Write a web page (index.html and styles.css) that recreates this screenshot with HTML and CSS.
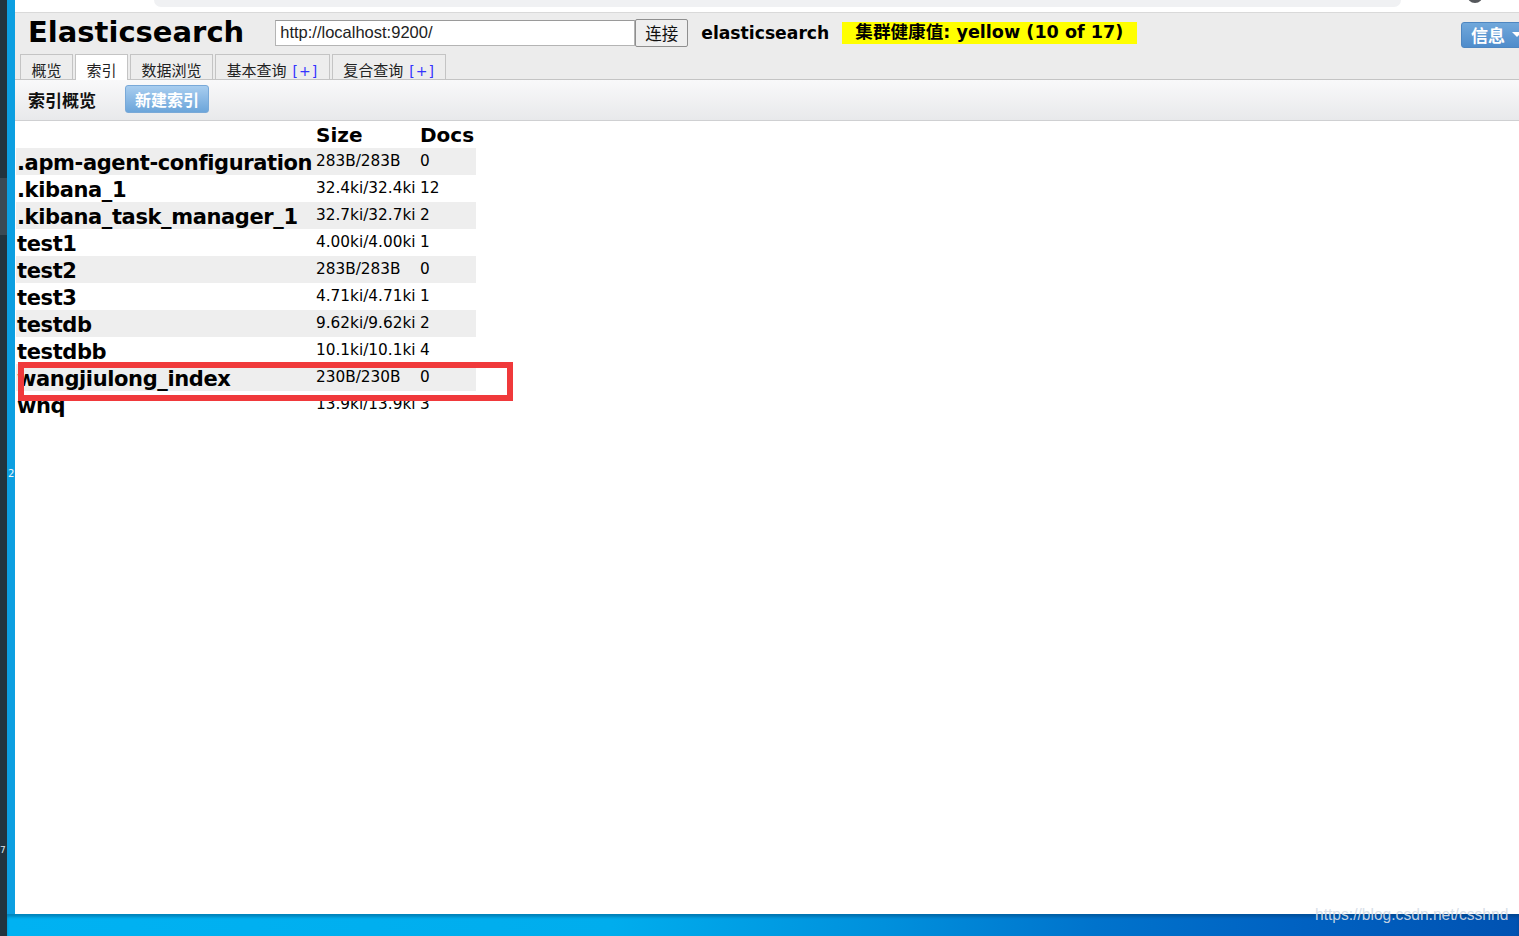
FILE: index.html
```html
<!DOCTYPE html>
<html lang="zh-CN">
<head>
<meta charset="utf-8">
<title>Elasticsearch</title>
<link rel="stylesheet" href="styles.css">
</head>
<body>
<div class="desk">
  <div class="dock">
    <div class="dock-seg"></div>
    <div class="dock-num">7</div>
  </div>
  <div class="screen">
    <div class="upper">
      <div class="edge"><span class="edge-num">2</span></div>
      <div class="browser">
        <div class="chrome">
          <div class="omni"></div>
          <div class="avatar"></div>
        </div>
        <div class="header">
          <div class="topline">
            <h1 class="brand">Elasticsearch</h1>
            <input class="url" type="text" value="http://localhost:9200/">
            <button class="connect">连接</button>
            <span class="cluster">elasticsearch</span>
            <span class="health">集群健康值: yellow (10 of 17)</span>
            <button class="info">信息<span class="caret"></span></button>
          </div>
          <div class="tabs">
            <div class="tab">概览</div>
            <div class="tab active">索引</div>
            <div class="tab">数据浏览</div>
            <div class="tab">基本查询<span class="plus">[+]</span></div>
            <div class="tab">复合查询<span class="plus">[+]</span></div>
          </div>
        </div>
        <div class="toolbar">
          <h2 class="tb-title">索引概览</h2>
          <button class="newbtn">新建索引</button>
        </div>
        <div class="content">
          <table class="indices">
            <thead>
              <tr><th class="name"></th><th class="size">Size</th><th class="docs">Docs</th></tr>
            </thead>
            <tbody>
              <tr class="alt"><td class="name">.apm-agent-configuration</td><td class="size">283B/283B</td><td class="docs">0</td></tr>
              <tr><td class="name">.kibana_1</td><td class="size">32.4ki/32.4ki</td><td class="docs">12</td></tr>
              <tr class="alt"><td class="name">.kibana_task_manager_1</td><td class="size">32.7ki/32.7ki</td><td class="docs">2</td></tr>
              <tr><td class="name">test1</td><td class="size">4.00ki/4.00ki</td><td class="docs">1</td></tr>
              <tr class="alt"><td class="name">test2</td><td class="size">283B/283B</td><td class="docs">0</td></tr>
              <tr><td class="name">test3</td><td class="size">4.71ki/4.71ki</td><td class="docs">1</td></tr>
              <tr class="alt"><td class="name">testdb</td><td class="size">9.62ki/9.62ki</td><td class="docs">2</td></tr>
              <tr><td class="name">testdbb</td><td class="size">10.1ki/10.1ki</td><td class="docs">4</td></tr>
              <tr class="alt"><td class="name">wangjiulong_index</td><td class="size">230B/230B</td><td class="docs">0</td></tr>
              <tr><td class="name">whq</td><td class="size">13.9ki/13.9ki</td><td class="docs">3</td></tr>
            </tbody>
          </table>
          <div class="mark"></div>
        </div>
      </div>
    </div>
    <div class="taskbar"></div>
  </div>
  <div class="watermark">https://blog.csdn.net/csshnd</div>
</div>
</body>
</html>
```
FILE: styles.css
```css
* { box-sizing: border-box; }
html, body { margin: 0; padding: 0; }
body {
  width: 1519px;
  height: 936px;
  overflow: hidden;
  font-family: "DejaVu Sans", "Noto Sans CJK SC", sans-serif;
  color: #000;
}
.desk { display: flex; height: 936px; position: relative; }

.dock { width: 7px; flex: none; background: #22343e; position: relative; overflow: hidden; }
.dock-seg { margin-top: 178px; height: 57px; background: #3a4a54; }
.dock-num { position: absolute; left: 0; top: 845px; color: #dfe6ea; font: 9px/10px "DejaVu Sans", sans-serif; }

.screen { flex: 1; display: flex; flex-direction: column; min-width: 0; }
.upper { display: flex; height: 914px; flex: none; }
.edge { width: 8px; flex: none; background: #0c9fe1; position: relative; overflow: hidden; }
.edge-num { position: absolute; left: 1px; top: 468px; color: #f2f6f8; font: 10px/12px "DejaVu Sans", sans-serif; }

.browser { flex: 1; display: flex; flex-direction: column; background: #fff; min-width: 0; overflow: hidden; }

.chrome { height: 13px; flex: none; background: #fff; border-bottom: 1px solid #d9d9d9; position: relative; display: flex; }
.omni { margin-left: 139px; width: 1247px; height: 7px; background: #f0f1f3; border-radius: 0 0 12px 12px; }
.avatar { position: absolute; left: 1452px; top: -13px; width: 16px; height: 16px; border-radius: 50%; background: #55585c; }

.header { background: #ececec; padding-left: 5px; flex: none; }
.topline { display: flex; align-items: center; height: 39px; white-space: nowrap; }
.brand { margin: 0 0 0 8px; font-size: 29px; font-weight: bold; line-height: 1; }
.url {
  margin-left: 31px; width: 360px; height: 26px;
  border: 1px solid #b4b4b4; border-top-color: #9a9a9a;
  background: #fff; padding: 0 4px;
  font-family: "Liberation Sans", Arial, sans-serif; font-size: 16.5px; color: #222;
  outline: none;
}
.connect {
  width: 53px; height: 28px; margin: 0; padding: 0;
  border: 1px solid #8f8f8f; border-radius: 2px; background: #efefef;
  font-family: "Noto Sans CJK SC", sans-serif; font-size: 16.5px; color: #111;
}
.cluster { margin-left: 13px; font-size: 17.2px; font-weight: bold; }
.health {
  margin-left: 13px; width: 295px; height: 22px; padding-left: 13px;
  background: #ffff00; display: flex; align-items: center;
  font-size: 17.6px; font-weight: bold; line-height: 1;
}
.info {
  margin-left: auto; margin-right: -12px; margin-top: 4px;
  height: 26px; padding: 0 8px 0 9px;
  display: flex; align-items: center; gap: 7px;
  border: 1px solid #4e86c0; border-radius: 3px;
  background: linear-gradient(#71a8db, #4f8ccb);
  color: #fff; font-family: "Noto Sans CJK SC", sans-serif; font-size: 17px; font-weight: bold;
}
.caret { width: 0; height: 0; border-left: 5px solid transparent; border-right: 5px solid transparent; border-top: 5px solid #fff; }

.tabs { display: flex; align-items: flex-end; gap: 2px; margin-top: 2px; height: 25px; position: relative; z-index: 2; }
.tab {
  height: 25px; padding: 6px 10.5px 0;
  border: 1px solid #c4c4c4; border-bottom: none;
  background: #ededed;
  font-family: "Noto Sans CJK SC", sans-serif; font-size: 15px; line-height: 18px; color: #222;
  white-space: nowrap;
}
.tab.active { background: #fff; height: 26px; margin-bottom: -1px; }
.plus { color: #3434ff; margin-left: 6px; letter-spacing: 1px; font-family: "DejaVu Sans", sans-serif; font-size: 14px; }

.toolbar {
  height: 42px; flex: none; display: flex; align-items: center; padding-left: 13px;
  border-top: 1px solid #c4c4c4; border-bottom: 1px solid #cfd0d2;
  background: linear-gradient(#f9f9fa, #e8e9eb);
  position: relative; z-index: 1;
}
.tb-title { margin: -2px 0 0; font-family: "Noto Sans CJK SC", sans-serif; font-size: 17px; font-weight: bold; color: #111; }
.newbtn {
  margin-left: 29px; margin-top: -3px; height: 28px; padding: 0 9px;
  border: 1px solid #79a9d8; border-radius: 3px;
  background: linear-gradient(#a8cdef, #6ca5da);
  color: #fff; font-family: "Noto Sans CJK SC", sans-serif; font-size: 16px; font-weight: bold;
}

.content { position: relative; padding-left: 1px; flex: 1; }
.indices { border-collapse: collapse; }
.indices th, .indices td { padding: 0; text-align: left; vertical-align: middle; }
.indices th { height: 27px; font-size: 20px; font-weight: bold; line-height: 26px; padding-top: 1px; }
.indices th.size { padding-left: 3px; }
.indices th.docs { padding-left: 2px; }
.indices td.name { width: 297px; padding: 3px 0 0 1px; font-size: 21px; font-weight: bold; line-height: 24px; letter-spacing: -0.38px; white-space: nowrap; }
.indices td.size { width: 105px; padding-left: 3px; font-size: 15.3px; line-height: 27px; white-space: nowrap; }
.indices td.docs { width: 58px; padding-left: 2px; font-size: 15.3px; line-height: 27px; }
.indices tr.alt { background: #eeeeee; }

.mark { position: absolute; left: 3px; top: 241px; width: 495px; height: 39px; border: 6px solid #f0393b; }

.taskbar {
  flex: 1;
  background: linear-gradient(90deg, #00b2f2 0%, #00aded 40%, #0090dc 58%, #0073cc 72%, #0062c2 85%, #0052b2 100%);
  box-shadow: inset 0 3px 3px rgba(0, 50, 90, 0.35);
}

.watermark {
  position: absolute; left: 1315px; top: 907px;
  font-family: "Liberation Sans", Arial, sans-serif; font-size: 15.6px; line-height: 16px;
  color: rgba(212, 220, 230, 0.92);
  white-space: nowrap;
}
```
